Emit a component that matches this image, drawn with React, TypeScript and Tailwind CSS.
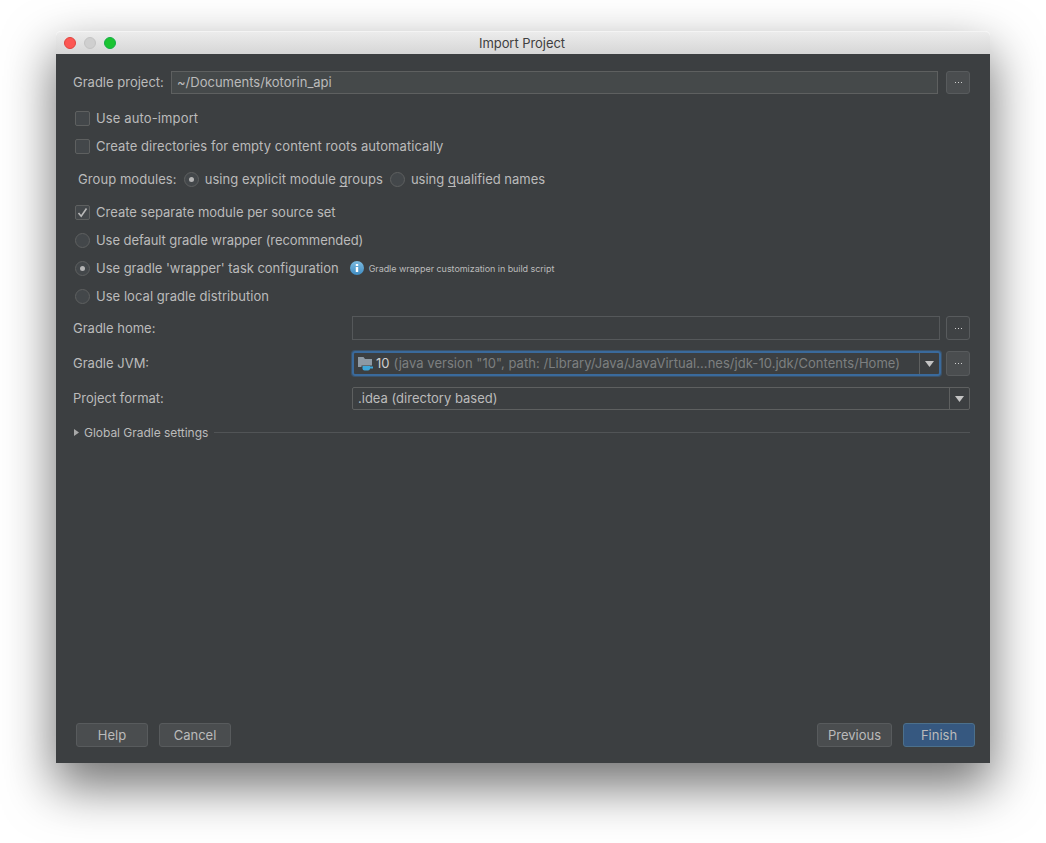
import React from "react";

const txt = "text-[#bbbbbb]";

function Check({ checked = false }: { checked?: boolean }) {
  return (
    <span className="w-[15px] h-[15px] shrink-0 rounded-[2px] border border-[#5e6060] bg-[#43474a] flex items-center justify-center">
      {checked && (
        <svg width="13" height="13" viewBox="0 0 13 13" fill="none">
          <path d="M2.5 7 L5.2 10.2 L10.5 2.5" stroke="#b9b9b9" strokeWidth="1.6" />
        </svg>
      )}
    </span>
  );
}

function Radio({ checked = false }: { checked?: boolean }) {
  return (
    <span className="w-[15px] h-[15px] shrink-0 rounded-full border border-[#5e6060] bg-[#43474a] flex items-center justify-center">
      {checked && <span className="w-[5px] h-[5px] rounded-full bg-[#b5b5b5]" />}
    </span>
  );
}

function Dots({ raised = false }: { raised?: boolean }) {
  return (
    <button className={`w-[24px] self-stretch shrink-0 rounded-[3px] border border-[#585b5d] flex items-center justify-center gap-[2px] ${raised ? "bg-[#4a4d4f]" : "bg-[#3f4244]"}`}>
      <span className="w-[1px] h-[1px] bg-[#d0d0d0]" />
      <span className="w-[1px] h-[1px] bg-[#d0d0d0]" />
      <span className="w-[1px] h-[1px] bg-[#d0d0d0]" />
    </button>
  );
}

function Arrow() {
  return (
    <svg width="9" height="6" viewBox="0 0 9 6">
      <path d="M0 0 H9 L4.5 6 Z" fill="#c4c4c4" />
    </svg>
  );
}

function OptionRow({ children }: { children: React.ReactNode }) {
  return <div className="h-[28px] flex items-center gap-[6px] pl-[19px]">{children}</div>;
}

function T({ children, className = "" }: { children: React.ReactNode; className?: string }) {
  return <span className={`pt-[2px] ${className}`}>{children}</span>;
}

function Mn({ children }: { children: React.ReactNode }) {
  return <span className="underline underline-offset-2 [text-decoration-skip-ink:none]">{children}</span>;
}

function FootBtn({ label, w, primary = false }: { label: string; w: string; primary?: boolean }) {
  return (
    <button className={`${w} h-[24px] pt-[2px] rounded-[3px] border text-[13px] ${primary ? "bg-[#365880] border-[#4c708c] text-[#bbbbbb]" : "bg-[#4a4d4f] border-[#585b5d] text-[#bbbbbb]"}`}>
      {label}
    </button>
  );
}

export default function App() {
  return (
    <div className="h-[843px] w-[1046px] bg-white pt-[31px] pl-[56px] overflow-hidden font-['Inter',sans-serif]">
      <div className="w-[934px] h-[732px] flex flex-col rounded-t-[5px] shadow-[0_22px_50px_2px_rgba(0,0,0,0.55)]">
        <div className="h-[23px] shrink-0 rounded-t-[5px] bg-gradient-to-b from-[#ececec] to-[#d6d6d6] border-t border-[#f4f4f4] flex items-center relative">
          <div className="absolute left-[8px] top-[5px] flex gap-[8px]">
            <span className="w-[12px] h-[12px] rounded-full bg-[#fc5753] border border-[#e0443e]" />
            <span className="w-[12px] h-[12px] rounded-full bg-[#cfcfcf] border border-[#c4c4c4]" />
            <span className="w-[12px] h-[12px] rounded-full bg-[#1bc431] border border-[#14ae46]" />
          </div>
          <span className="w-full text-center text-[13px] pt-[2px] tracking-[-0.05px] text-[#404040] -ml-[1px]">Import Project</span>
        </div>

        <div className={`flex-1 bg-[#3c3f41] flex flex-col pt-[17px] pr-[20px] pb-[16px] text-[13px] ${txt}`}>
          <div className="h-[23px] flex items-stretch pl-[17px]">
            <span className="w-[98px] shrink-0 self-center">Gradle project:</span>
            <div className="flex-1 border border-[#5e6060] bg-[#45494a] flex items-center pl-[5px] mr-[8px]">~/Documents/kotorin_api</div>
            <Dots raised />
          </div>

          <div className="mt-[10px]">
            <OptionRow><Check /><T className="tracking-[0.13px]">Use auto-import</T></OptionRow>
            <OptionRow><Check /><T className="tracking-[0.07px]">Create directories for empty content roots automatically</T></OptionRow>
          </div>

          <div className="mt-[5px] h-[28px] flex items-center pl-[22px]">
            <T className="tracking-[0.07px]">Group modules:</T>
            <span className="ml-[7px]"><Radio checked /></span>
            <T className="ml-[6px] tracking-[0.07px]">using explicit module <Mn>g</Mn>roups</T>
            <span className="ml-[7px]"><Radio /></span>
            <T className="ml-[6px]">using <Mn>q</Mn>ualified names</T>
          </div>

          <div className="mt-[5px]">
            <OptionRow><Check checked /><T>Create separate module per source set</T></OptionRow>
            <OptionRow><Radio /><T className="tracking-[-0.07px]">Use default gradle wrapper (recommended)</T></OptionRow>
            <OptionRow>
              <Radio checked />
              <T className="tracking-[-0.03px]">Use gradle 'wrapper' task configuration</T>
              <svg className="ml-[5px] shrink-0" width="14" height="14" viewBox="0 0 14 14">
                <defs>
                  <linearGradient id="infoGrad" x1="0" y1="0" x2="0" y2="1">
                    <stop offset="0" stopColor="#7dbbe0" />
                    <stop offset="1" stopColor="#3f8cc2" />
                  </linearGradient>
                </defs>
                <circle cx="7" cy="7" r="7" fill="url(#infoGrad)" />
                <rect x="5.8" y="6" width="2.4" height="5" fill="#fff" />
                <rect x="5.8" y="3" width="2.4" height="2" fill="#fff" />
              </svg>
              <T className="text-[9px] -ml-[1px] tracking-[-0.05px]">Gradle wrapper customization in build script</T>
            </OptionRow>
            <OptionRow><Radio /><T className="tracking-[0.04px]">Use local gradle distribution</T></OptionRow>
          </div>

          <div className="mt-[6px] h-[24px] flex items-stretch pl-[17px]">
            <T className="w-[279px] shrink-0 self-center">Gradle home:</T>
            <div className="flex-1 border border-[#55585a] mr-[6px]" />
            <Dots />
          </div>

          <div className="mt-[11px] h-[25px] flex items-stretch pl-[17px]">
            <span className="w-[279px] shrink-0 self-center">Gradle JVM:</span>
            <div className="flex-1 rounded-[3px] border-2 border-[#3a6a9c] shadow-[0_0_0_1px_rgba(58,106,156,0.45)] flex items-stretch mr-[5px]">
              <div className="flex-1 flex items-center pl-[4px] gap-[2px] min-w-0 whitespace-nowrap overflow-hidden">
                <svg className="shrink-0" width="16" height="15" viewBox="0 0 16 15">
                  <path d="M0 1 H5.5 L7 3 H14 V11 H0 Z" fill="#8d99a4" />
                  <path d="M3.5 9.5 H15.5 V15 H3.5 Z" fill="#3c3f41" />
                  <path d="M4.5 10 H12 V12.5 Q12 14.5 10 14.5 H6.5 Q4.5 14.5 4.5 12.5 Z" fill="#3ea6d9" />
                  <path d="M12 10.5 H15 V12.5 H12 Z" fill="#3ea6d9" />
                </svg>
                <span className="text-[#cfcfcf]">10</span>
                <span className="text-[#7d7f80] ml-[2px] tracking-[0.04px]">(java version "10", path: /Library/Java/JavaVirtual...nes/jdk-10.jdk/Contents/Home)</span>
              </div>
              <div className="w-[20px] shrink-0 border-l border-[#5e6060] flex items-center justify-center"><Arrow /></div>
            </div>
            <Dots raised />
          </div>

          <div className="mt-[11px] h-[23px] flex items-stretch pl-[17px]">
            <span className="w-[279px] shrink-0 self-center">Project format:</span>
            <div className="flex-1 rounded-[2px] border border-[#5e6060] flex items-stretch">
              <div className="flex-1 flex items-center pl-[5px]">.idea (directory based)</div>
              <div className="w-[20px] shrink-0 border-l border-[#5e6060] flex items-center justify-center"><Arrow /></div>
            </div>
          </div>

          <div className="mt-[12px] h-[20px] flex items-center pl-[18px]">
            <svg width="5" height="7" viewBox="0 0 5 7" className="shrink-0"><path d="M0 0 L5 3.5 L0 7 Z" fill="#a8a8a8" /></svg>
            <T className="ml-[5px] text-[12px] tracking-[-0.03px]">Global Gradle settings</T>
            <div className="ml-[6px] flex-1 h-px bg-[#515456]" />
          </div>

          <div className="flex-1" />

          <div className="flex items-center pl-[20px] -mr-[5px]">
            <FootBtn label="Help" w="w-[72px]" />
            <span className="w-[11px]" />
            <FootBtn label="Cancel" w="w-[72px]" />
            <div className="flex-1" />
            <FootBtn label="Previous" w="w-[75px]" />
            <span className="w-[11px]" />
            <FootBtn label="Finish" w="w-[72px]" primary />
          </div>
        </div>
      </div>
    </div>
  );
}
